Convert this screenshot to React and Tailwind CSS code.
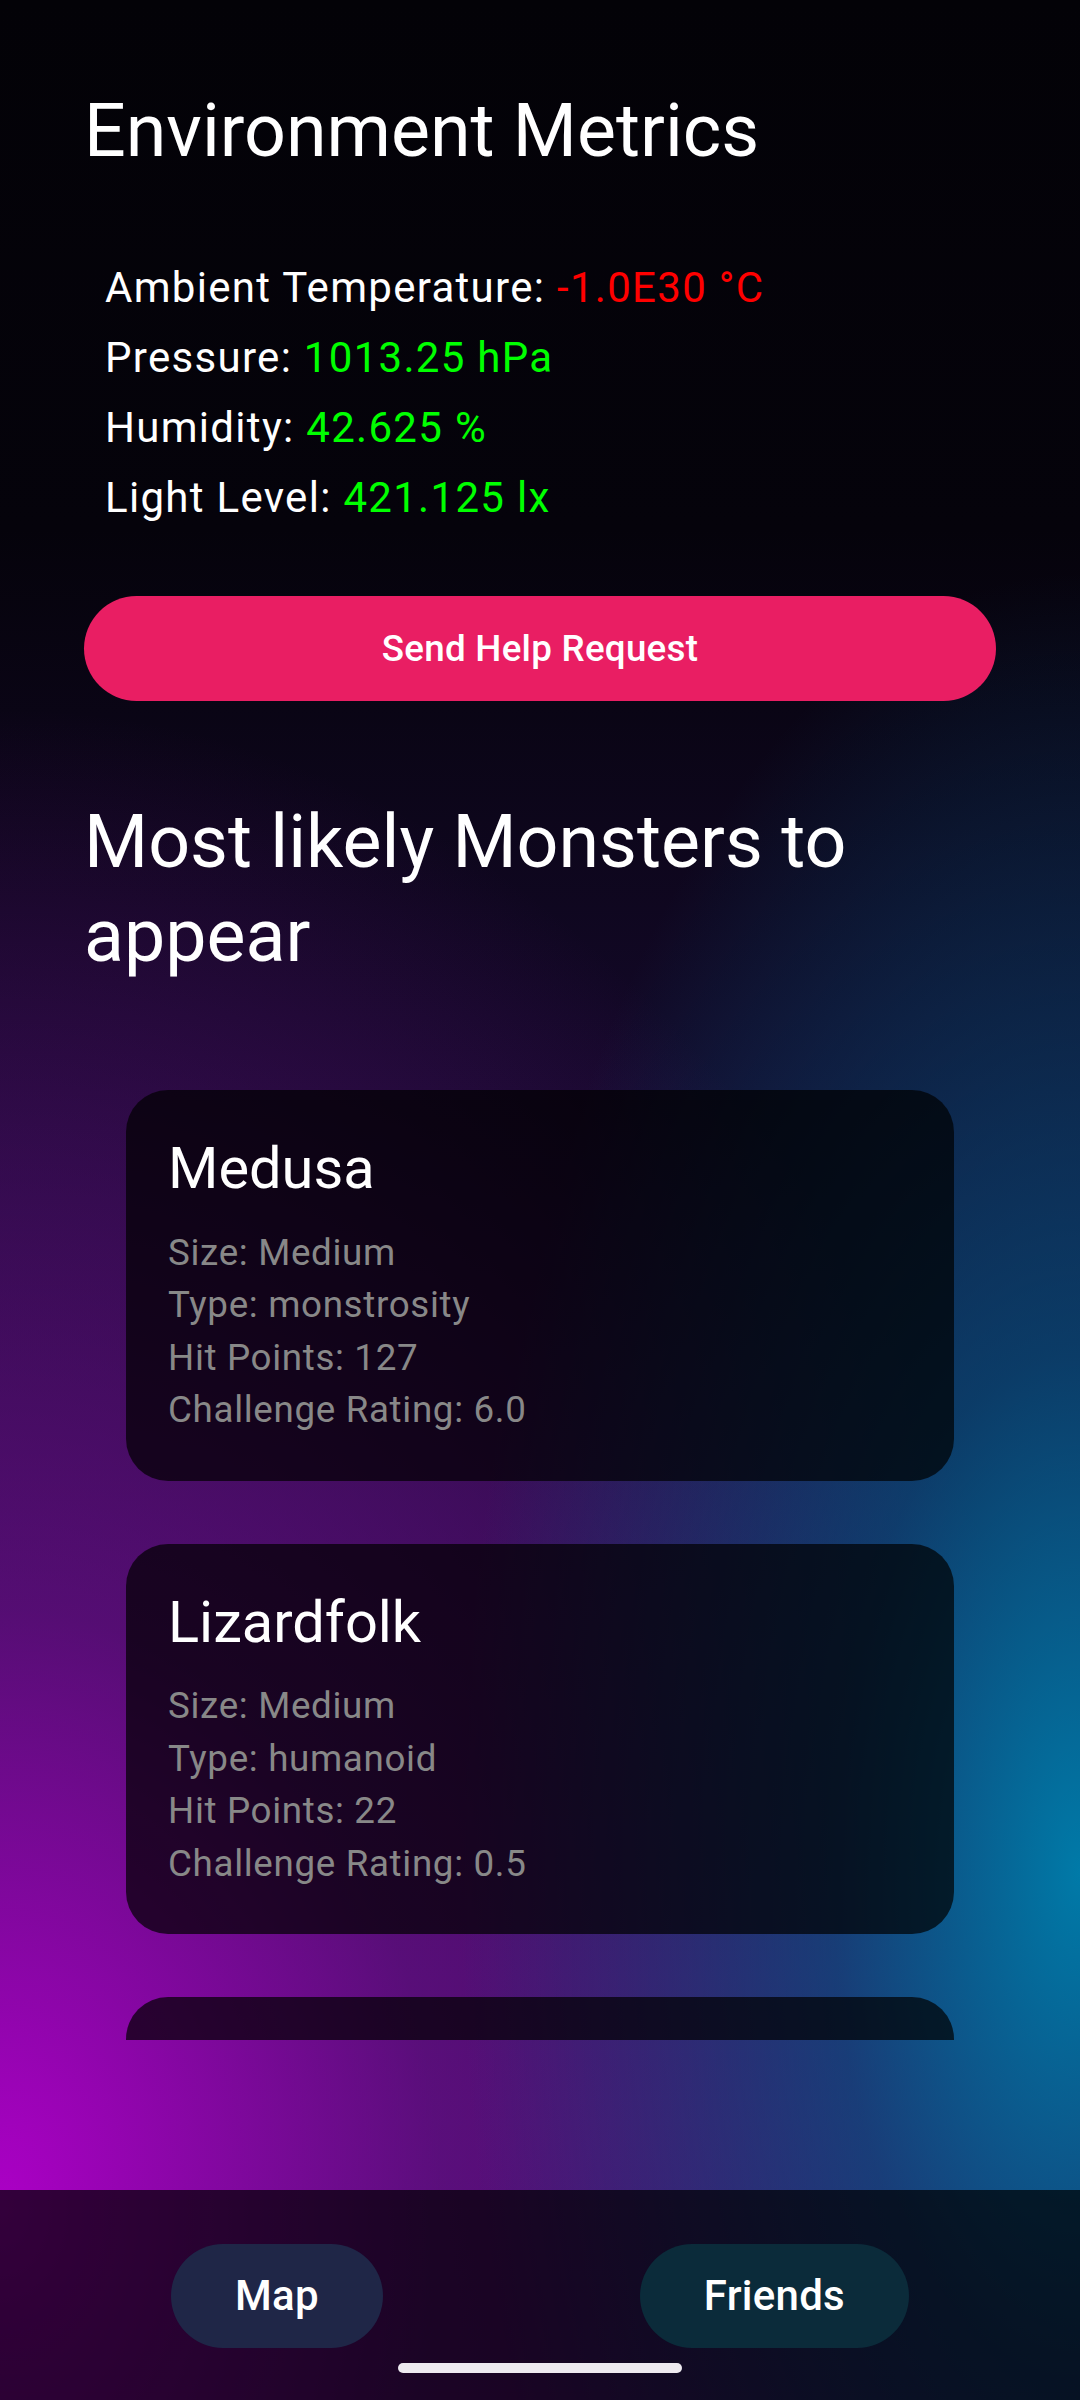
import React from "react"

const metrics = [
    { label: "Ambient Temperature:", value: "-1.0E30 °C", bad: true },
    { label: "Pressure:", value: "1013.25 hPa" },
    { label: "Humidity:", value: "42.625 %" },
    { label: "Light Level:", value: "421.125 lx" },
]

const monsters = [
    { name: "Medusa", size: "Medium", type: "monstrosity", hp: 127, cr: "6.0" },
    { name: "Lizardfolk", size: "Medium", type: "humanoid", hp: 22, cr: "0.5" },
]

// Card for one monster entry
function MonsterCard({ monster }) {
    return (
        <div className="shrink-0 rounded-[42px] bg-black/70 px-[42px] pt-[42px] pb-[44px]">
            <p className="text-[57.75px] leading-[73.5px] text-white">{monster.name}</p>
            <div className="mt-[21px] text-[36.75px] leading-[52.5px] tracking-[0.66px] text-[#888888]">
                <p>Size: {monster.size}</p>
                <p>Type: {monster.type}</p>
                <p>Hit Points: {monster.hp}</p>
                <p>Challenge Rating: {monster.cr}</p>
            </div>
        </div>
    )
}

export default function App() {
    return (
        <div className="relative flex h-[2400px] w-[1080px] flex-col overflow-hidden font-['Roboto',sans-serif] bg-[#030207] bg-[image:radial-gradient(ellipse_620px_1300px_at_100%_78%,rgba(0,122,168,1)_0%,rgba(0,92,135,0.6)_40%,rgba(0,60,100,0)_100%),radial-gradient(ellipse_1100px_1500px_at_0%_92%,rgba(172,0,198,1)_0%,rgba(116,14,146,0.62)_40%,rgba(60,8,90,0)_100%),linear-gradient(to_bottom,#030207_0%,#05030b_22%,#170a30_50%,#361060_100%)]">
            {/* Main content */}
            <div className="flex h-[2190px] shrink-0 flex-col px-[84px] pt-[84px]">
                <h1 className="text-[73.5px] leading-[94.5px] text-white">Environment Metrics</h1>

                <div className="mt-[74px] pl-[21px] text-[42px] leading-[70px] tracking-[1.3px] text-white">
                    {metrics.map((m) => (
                        <p key={m.label}>
                            {m.label}{" "}
                            <span className={m.bad ? "text-[#ff0000]" : "text-[#00ff00]"}>{m.value}</span>
                        </p>
                    ))}
                </div>

                <button className="mt-[63.5px] flex h-[105px] w-full shrink-0 items-center justify-center rounded-full bg-[#e91e63] text-[36.75px] font-medium tracking-[0.26px] text-white">
                    Send Help Request
                </button>

                <h2 className="mt-[93.5px] text-[73.5px] leading-[94.5px] text-white">Most likely Monsters to appear</h2>

                <div className="mt-[106.5px] flex h-[950px] shrink-0 flex-col gap-[63px] overflow-hidden px-[42px]">
                    {monsters.map((m) => (
                        <MonsterCard key={m.name} monster={m} />
                    ))}
                    {/* next card, scrolled out of view */}
                    <div className="h-[390px] shrink-0 rounded-[42px] bg-black/70" />
                </div>
            </div>

            {/* Bottom navigation */}
            <div className="flex flex-1 items-start justify-between bg-black/70 px-[171px] pt-[53.5px]">
                <button className="flex h-[104px] items-center rounded-full bg-[#1f2647] px-[64px] text-[42px] font-medium tracking-[0.26px] text-white">
                    Map
                </button>
                <button className="flex h-[104px] items-center rounded-full bg-[#0b2b3a] px-[64px] text-[42px] font-medium tracking-[0.26px] text-white">
                    Friends
                </button>
            </div>

            {/* gesture bar */}
            <div className="absolute bottom-[27px] left-[398px] h-[10px] w-[284px] rounded-full bg-[#eeeaf0]" />
        </div>
    )
}
